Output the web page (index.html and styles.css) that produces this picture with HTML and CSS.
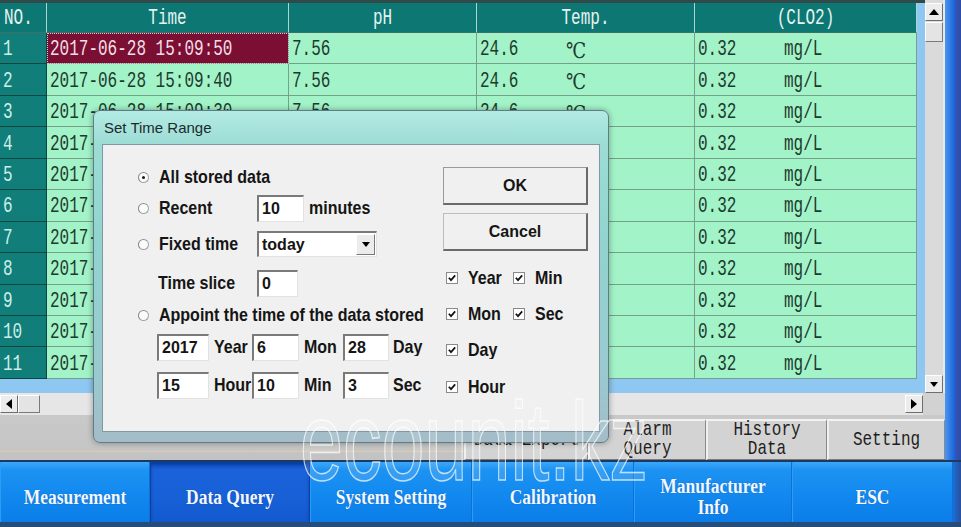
FILE: index.html
```html
<!DOCTYPE html>
<html>
<head>
<meta charset="utf-8">
<link rel="stylesheet" href="styles.css">
</head>
<body>
<div class="screen">
  <div class="work">
    <div class="left">
      <div class="top">
        <div class="tablecol">
          <div class="grid">
            <div class="h hl"><span>NO.</span></div>
            <div class="h"><span>Time</span></div>
            <div class="h"><span>pH</span></div>
            <div class="h"><span>Temp.</span></div>
            <div class="h"><span>(CLO2)</span></div>

            <div class="n"><span>1</span></div>
            <div class="c sel"><span>2017-06-28 15:09:50</span></div>
            <div class="c"><span>7.56</span></div>
            <div class="c"><span class="v">24.6</span><span class="u">℃</span></div>
            <div class="c"><span class="v">0.32</span><span>mg/L</span></div>

            <div class="n"><span>2</span></div>
            <div class="c"><span>2017-06-28 15:09:40</span></div>
            <div class="c"><span>7.56</span></div>
            <div class="c"><span class="v">24.6</span><span class="u">℃</span></div>
            <div class="c"><span class="v">0.32</span><span>mg/L</span></div>

            <div class="n"><span>3</span></div>
            <div class="c"><span>2017-06-28 15:09:30</span></div>
            <div class="c"><span>7.56</span></div>
            <div class="c"><span class="v">24.6</span><span class="u">℃</span></div>
            <div class="c"><span class="v">0.32</span><span>mg/L</span></div>

            <div class="n"><span>4</span></div>
            <div class="c"><span>2017-06-28 15:09:20</span></div>
            <div class="c"><span>7.56</span></div>
            <div class="c"><span class="v">24.6</span><span class="u">℃</span></div>
            <div class="c"><span class="v">0.32</span><span>mg/L</span></div>

            <div class="n"><span>5</span></div>
            <div class="c"><span>2017-06-28 15:09:10</span></div>
            <div class="c"><span>7.56</span></div>
            <div class="c"><span class="v">24.6</span><span class="u">℃</span></div>
            <div class="c"><span class="v">0.32</span><span>mg/L</span></div>

            <div class="n"><span>6</span></div>
            <div class="c"><span>2017-06-28 15:09:00</span></div>
            <div class="c"><span>7.56</span></div>
            <div class="c"><span class="v">24.6</span><span class="u">℃</span></div>
            <div class="c"><span class="v">0.32</span><span>mg/L</span></div>

            <div class="n"><span>7</span></div>
            <div class="c"><span>2017-06-28 15:08:50</span></div>
            <div class="c"><span>7.56</span></div>
            <div class="c"><span class="v">24.6</span><span class="u">℃</span></div>
            <div class="c"><span class="v">0.32</span><span>mg/L</span></div>

            <div class="n"><span>8</span></div>
            <div class="c"><span>2017-06-28 15:08:40</span></div>
            <div class="c"><span>7.56</span></div>
            <div class="c"><span class="v">24.6</span><span class="u">℃</span></div>
            <div class="c"><span class="v">0.32</span><span>mg/L</span></div>

            <div class="n"><span>9</span></div>
            <div class="c"><span>2017-06-28 15:08:30</span></div>
            <div class="c"><span>7.56</span></div>
            <div class="c"><span class="v">24.6</span><span class="u">℃</span></div>
            <div class="c"><span class="v">0.32</span><span>mg/L</span></div>

            <div class="n"><span>10</span></div>
            <div class="c"><span>2017-06-28 15:08:20</span></div>
            <div class="c"><span>7.56</span></div>
            <div class="c"><span class="v">24.6</span><span class="u">℃</span></div>
            <div class="c"><span class="v">0.32</span><span>mg/L</span></div>

            <div class="n"><span>11</span></div>
            <div class="c"><span>2017-06-28 15:08:10</span></div>
            <div class="c"><span>7.56</span></div>
            <div class="c"><span class="v">24.6</span><span class="u">℃</span></div>
            <div class="c"><span class="v">0.32</span><span>mg/L</span></div>
          </div>
        </div>
        <div class="vscroll">
          <div class="sb"><i class="tri up"></i></div>
          <div class="thumb vt"></div>
          <div class="track"></div>
          <div class="sb"><i class="tri down"></i></div>
        </div>
      </div>
      <div class="hscroll">
        <div class="sb"><i class="tri lf"></i></div>
        <div class="thumb ht"></div>
        <div class="track"></div>
        <div class="sb"><i class="tri rt"></i></div>
        <div class="corner"></div>
      </div>
      <div class="btnbar">
        <div class="fb w124"><span>Data Export</span></div>
        <div class="fb w118"><span>Alarm<br>Query</span></div>
        <div class="fb w121"><span>History<br>Data</span></div>
        <div class="fb w118"><span>Setting</span></div>
      </div>
    </div>
    <div class="rstrip"></div>
  </div>
  <nav class="nav">
    <div class="nb"><span>Measurement</span></div>
    <div class="nb on"><span>Data Query</span></div>
    <div class="nb"><span>System Setting</span></div>
    <div class="nb"><span>Calibration</span></div>
    <div class="nb"><span>Manufacturer<br>Info</span></div>
    <div class="nb"><span>ESC</span></div>
    <div class="nend"></div>
  </nav>

  <div class="dialog">
    <div class="title">Set Time Range</div>
    <div class="client">
      <div class="lcol">
        <div class="row">
          <span class="radio on"></span><span class="lb">All stored data</span>
        </div>
        <div class="row">
          <span class="radio"></span><span class="lb w98">Recent</span>
          <span class="inp w47">10</span><span class="lb ml5">minutes</span>
        </div>
        <div class="row">
          <span class="radio"></span><span class="lb w98">Fixed time</span>
          <span class="combo"><span class="ctext">today</span><span class="dd"><i class="tri down"></i></span></span>
        </div>
        <div class="row">
          <span class="lb ind20 w99">Time slice</span>
          <span class="inp w41">0</span>
        </div>
        <div class="row">
          <span class="radio"></span><span class="lb">Appoint the time of the data stored</span>
        </div>
        <div class="row ind19">
          <span class="inp w52">2017</span><span class="lb dl w43">Year</span>
          <span class="inp w47">6</span><span class="lb dl w44">Mon</span>
          <span class="inp w46">28</span><span class="lb dl4">Day</span>
        </div>
        <div class="row ind19">
          <span class="inp w52">15</span><span class="lb dl w43">Hour</span>
          <span class="inp w47">10</span><span class="lb dl w44">Min</span>
          <span class="inp w46">3</span><span class="lb dl4">Sec</span>
        </div>
      </div>
      <div class="rcol">
        <div class="btn ok">OK</div>
        <div class="btn">Cancel</div>
        <div class="chk">
          <span class="cb"><svg viewBox="0 0 11 11"><path d="M2 5.2 L4.4 7.8 L9 2.6" fill="none" stroke="#111" stroke-width="1.9"/></svg></span><span class="lb cw">Year</span>
          <span class="cb"><svg viewBox="0 0 11 11"><path d="M2 5.2 L4.4 7.8 L9 2.6" fill="none" stroke="#111" stroke-width="1.9"/></svg></span><span class="lb">Min</span>
        </div>
        <div class="chk">
          <span class="cb"><svg viewBox="0 0 11 11"><path d="M2 5.2 L4.4 7.8 L9 2.6" fill="none" stroke="#111" stroke-width="1.9"/></svg></span><span class="lb cw">Mon</span>
          <span class="cb"><svg viewBox="0 0 11 11"><path d="M2 5.2 L4.4 7.8 L9 2.6" fill="none" stroke="#111" stroke-width="1.9"/></svg></span><span class="lb">Sec</span>
        </div>
        <div class="chk">
          <span class="cb"><svg viewBox="0 0 11 11"><path d="M2 5.2 L4.4 7.8 L9 2.6" fill="none" stroke="#111" stroke-width="1.9"/></svg></span><span class="lb">Day</span>
        </div>
        <div class="chk">
          <span class="cb"><svg viewBox="0 0 11 11"><path d="M2 5.2 L4.4 7.8 L9 2.6" fill="none" stroke="#111" stroke-width="1.9"/></svg></span><span class="lb">Hour</span>
        </div>
      </div>
    </div>
  </div>

  <div class="watermark">ecounit.kz</div>
</div>
</body>
</html>
```
FILE: styles.css
```css
* { box-sizing: border-box; margin: 0; padding: 0; }
body { width: 961px; height: 527px; overflow: hidden; background: #c6c6c6; }
.screen { position: relative; width: 961px; height: 527px; overflow: hidden; }

.work { display: flex; height: 460px; }
.left { width: 945px; display: flex; flex-direction: column; }
.top { display: flex; height: 393px; }

.tablecol { width: 925px; background: #8ec8f2; border-top: 3px solid #2f4a48; padding-right: 8px; }
.grid {
  display: grid;
  grid-template-columns: 47px 242px 188px 218px 222px;
  grid-template-rows: 30px repeat(11, 31.45px);
  font-family: "Liberation Mono", "Noto Sans CJK SC", monospace;
  font-size: 16px;
}
.grid span { display: inline-block; transform: scaleY(1.35); white-space: pre; }
.h {
  background: #0d7773; color: #e6f3f1;
  display: flex; align-items: center; justify-content: center; padding-top: 3px;
  border-right: 1px solid #a9d6cf; border-bottom: 1px solid #3e6f6a;
}
.h.hl { justify-content: flex-start; padding-left: 4px; }
.n {
  background: #117e7a; color: #cdeee8;
  display: flex; align-items: center; padding-left: 3px; padding-top: 4px;
  border-right: 1px solid #0b4643; border-bottom: 1px solid #0b4643;
}
.c {
  background: #a3f3c9; color: #1d3a2e;
  display: flex; align-items: center; padding-left: 3px; padding-top: 4px;
  border-right: 1px solid #7c9e8c; border-bottom: 1px solid #74a08a;
}
.c.sel { background: #7b0f33; color: #f3dfe6; outline: 1px dotted #d9c6cc; outline-offset: -1px; }
.grid .v { width: 86px; }
.grid .u { font-family: "DejaVu Serif", "Noto Sans CJK SC", serif; font-size: 18px; transform: scaleY(1.2); }

/* scrollbars */
.sb {
  width: 18px; height: 18px; flex: none;
  background: #ececec;
  border: 1px solid; border-color: #ffffff #6e6e6e #6e6e6e #ffffff;
  display: flex; align-items: center; justify-content: center;
}
.tri { display: block; width: 0; height: 0; }
.tri.up { border-left: 5px solid transparent; border-right: 5px solid transparent; border-bottom: 6px solid #000; }
.tri.down { border-left: 4px solid transparent; border-right: 4px solid transparent; border-top: 5px solid #000; }
.tri.lf { border-top: 5px solid transparent; border-bottom: 5px solid transparent; border-right: 6px solid #000; }
.tri.rt { border-top: 5px solid transparent; border-bottom: 5px solid transparent; border-left: 6px solid #000; }
.thumb { background: #e4e4e4; border: 1px solid; border-color: #ffffff #7a7a7a #7a7a7a #ffffff; flex: none; }
.track { flex: 1; }

.vscroll { width: 20px; background: #dcdcdc; display: flex; flex-direction: column; padding-top: 3px; border-right: 2px solid #e8e8e8; }
.vscroll .thumb.vt { width: 18px; height: 20px; margin-top: 1px; }
.vscroll .track { background: #dadada; }

.hscroll { height: 22px; display: flex; align-items: center; background: #e6e6e6; }
.hscroll .thumb.ht { width: 22px; height: 18px; }
.hscroll .corner { width: 22px; height: 22px; background: #d2d2d2; }

.btnbar {
  height: 45px; display: flex; justify-content: flex-end; padding-top: 4px;
  background: linear-gradient(180deg, #c9c9c9 0, #c5c5c5 36px, #dccbb0 36px, #dccbb0 37px, #c3c3c3 37px);
}
.fb {
  display: flex; align-items: center; justify-content: center; text-align: center;
  background: #d3d3d3;
  border: 1px solid; border-color: #f2f2f2 #8a8a8a #7a7a7a #f0f0f0;
  border-width: 2px 1px 1px 2px;
  font-family: "Liberation Mono", monospace; font-size: 16px; color: #1e1e1e;
}
.fb span { display: inline-block; line-height: 15px; transform: scaleY(1.3); }
.w124 { width: 124px; }
.w118 { width: 118px; }
.w121 { width: 121px; }

.rstrip { width: 16px; background: linear-gradient(90deg, #4b97f0 0, #2a74e2 40%, #1f5ed2 62%, #3552b0 70%, #2c4aa6 100%); }

/* bottom nav */
.nav {
  display: grid;
  grid-template-columns: 150px 160px 162px 162px 158px 161px 8px;
  height: 67px;
  border-top: 2px solid #1a3a62;
  border-bottom: 5px solid #264c78;
}
.nb {
  display: flex; align-items: center; justify-content: center; text-align: center; padding-top: 11px;
  background: linear-gradient(180deg, #3ca6fa 0, #1c92f2 14%, #138aef 50%, #0b7de9 100%);
  border-left: 1px solid #2a9ef6; border-right: 1px solid #0f70d8;
  font-family: "Liberation Serif", serif; font-weight: bold; font-size: 17.5px; color: #f2f7ff;
  text-shadow: 0 0 1px rgba(0, 40, 120, .5);
}
.nb span { display: inline-block; line-height: 17.5px; transform: scaleY(1.15); }
.nb.on {
  background: linear-gradient(180deg, #0f4fc2 0, #1a62da 12%, #1760d6 60%, #1259ce 100%);
  border: 1px solid #0a3fa0; border-bottom: none;
  box-shadow: inset 0 2px 3px rgba(0, 20, 90, .35);
}
.nend { background: linear-gradient(90deg, #1a6fd8, #2a4f9a); }

/* dialog */
.dialog {
  position: absolute; left: 93px; top: 110px; width: 516px; height: 333px;
  display: flex; flex-direction: column;
  padding: 0 8px 10px 8px;
  border: 1px solid #5f7d84; border-radius: 7px;
  background: linear-gradient(180deg, #b3ebe3 0, #9cdcd5 10%, #92d3cf 40%, #9ac9d0 80%, #a4bcc8 100%);
  box-shadow: 0 0 6px rgba(0, 0, 0, .35);
}
.title {
  height: 33px; display: flex; align-items: center; padding-left: 2px;
  font-family: "Liberation Sans", sans-serif; font-size: 15px; color: #1b2b30;
}
.client {
  flex: 1; display: flex;
  background: #f0f0f0; border: 1px solid #7e98a4;
  padding-left: 35px;
  font-family: "Liberation Sans", sans-serif; font-weight: bold; font-size: 16px; color: #151515;
}
.lb { display: inline-block; transform: scaleY(1.12); white-space: nowrap; }

.lcol {
  width: 305px; padding-top: 17px;
  display: grid; grid-template-rows: 30px 32px 40px 38px 26px 38px 38px; align-content: start;
}
.row { display: flex; align-items: center; }
.radio {
  width: 11px; height: 11px; flex: none; position: relative; margin-right: 10px;
  border-radius: 50%; border: 1px solid #a4a4a4; border-left-color: #868686; border-top-color: #8c8c8c;
  background: #fbfbfb;
}
.radio.on::after {
  content: ""; position: absolute; left: 3px; top: 3px; width: 3px; height: 3px;
  border-radius: 50%; background: #1a1a1a;
}
.w98 { width: 98px; }
.w99 { width: 99px; }
.w43 { width: 43px; }
.w44 { width: 44px; }
.ml5 { margin-left: 5px; }
.ind20 { margin-left: 20px; }
.ind19 { padding-left: 19px; }
.dl { padding-left: 5px; }
.dl4 { padding-left: 4px; }

.inp {
  height: 27px; flex: none; display: flex; align-items: center; padding-left: 3px;
  background: #ffffff;
  border-style: solid; border-width: 2px 1px 1px 2px; border-color: #7a7a7a #e2e2e2 #e2e2e2 #7a7a7a;
}
.w41 { width: 41px; }
.w46 { width: 46px; }
.w47 { width: 47px; }
.w52 { width: 52px; }

.combo {
  width: 120px; height: 26px; flex: none; display: flex; align-items: center;
  background: #ffffff;
  border-style: solid; border-width: 2px 1px 1px 2px; border-color: #7a7a7a #e2e2e2 #e2e2e2 #7a7a7a;
}
.ctext { flex: 1; padding-left: 3px; }
.dd {
  width: 19px; height: 21px; margin-right: 1px;
  display: flex; align-items: center; justify-content: center;
  background: #ececec; border: 1px solid; border-color: #ffffff #7a7a7a #7a7a7a #ffffff;
}

.rcol {
  width: 145px; padding-top: 21px;
  display: grid; grid-template-rows: 40px 52px 40px 32px 40px 34px; align-items: center; align-content: start;
}
.btn {
  height: 38px; display: flex; align-items: center; justify-content: center;
  background: #f0f0f0;
  border-style: solid; border-width: 1px 2px 2px 1px; border-color: #bdbdbd #6a6a6a #6a6a6a #bdbdbd;
}
.btn.ok { border-top-color: #9a9a9a; border-left-color: #9a9a9a; }
.chk { display: flex; align-items: center; padding-left: 3px; }
.cb {
  width: 12px; height: 12px; flex: none; margin-right: 10px; display: inline-flex;
  background: #ffffff; border: 1px solid #8a8a8a;
}
.cb svg { width: 10px; height: 10px; }
.cw { width: 45px; }

.watermark {
  position: absolute; left: 300px; top: 402px;
  font-family: "Liberation Sans", sans-serif; font-size: 112px; line-height: 80px;
  color: rgba(255, 255, 255, .12);
  -webkit-text-stroke: 1.5px rgba(255, 255, 255, .7);
  transform: scaleX(.69); transform-origin: left top;
  white-space: nowrap; pointer-events: none;
}
```
